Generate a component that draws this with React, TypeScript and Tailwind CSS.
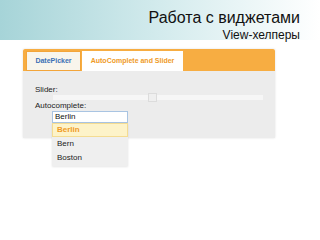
import React from "react";

const ITEMS = ["Berlin", "Bern", "Boston"];

export default function App() {
  return (
    <div className="relative h-[240px] w-[320px] overflow-hidden bg-white font-['Liberation_Sans',Arial,sans-serif]">
      {/* Slide header */}
      <div className="flex h-[40px] flex-col items-end bg-gradient-to-r from-[#a6d4d8] via-[#d3ebed] to-white pr-[20px] pt-[9px]">
        <div className="text-[16px] leading-[18px] text-[#111]">Работа с виджетами</div>
        <div className="mt-[2px] text-[12px] leading-[12px] text-[#111]">View-хелперы</div>
      </div>

      {/* Widget panel */}
      <div className="relative ml-[23px] mt-[9px] w-[252px] shadow-[0_0_2px_rgba(0,0,0,0.12)]">
        <div className="flex h-[22px] items-end gap-[1px] rounded-t-[2px] bg-[#f7ad42] pl-[3px]">
          <div className="flex h-[20px] w-[55px] items-center justify-center border border-[#f3a53a] bg-[#f8f5ec] text-[7px] font-bold text-[#3b70b5]">
            DatePicker
          </div>
          <div className="flex h-[20px] w-[101px] items-center justify-center bg-white text-[7px] font-bold text-[#ef9a26]">
            AutoComplete and Slider
          </div>
        </div>
        <div className="h-[67px] bg-[#ececec] px-[12px] pt-[14px] text-[8px] text-[#222]">
          <div className="h-[10px] leading-[10px]">Slider:</div>
          <div className="relative ml-[18px] h-[5px] w-[210px] bg-[#f6f6f6]">
            <div className="absolute left-[95px] top-[-2px] h-[9px] w-[9px] border border-[#dcdcdc] bg-[#efefef]" />
          </div>
          <div className="mt-[1px] h-[10px] leading-[10px]">Autocomplete:</div>
          <div className="relative ml-[17px] flex h-[12px] w-[76px] items-center border border-[#a9c4e2] bg-white pl-[2px] text-[8px] text-[#111]">
            Berlin
            <div className="absolute left-[-1px] top-[11px] w-[76px] bg-[#efefef] pb-[1px] shadow-[0_1px_2px_rgba(0,0,0,0.1)]">
              {ITEMS.map((c, i) => (
                <div
                  key={c}
                  className={
                    i === 0
                      ? "flex h-[14px] items-center border border-[#f4dc92] bg-[#fdf3c9] pl-[4px] font-bold text-[#ef9a26]"
                      : "flex h-[14px] items-center pl-[5px] text-[#222]"
                  }
                >
                  {c}
                </div>
              ))}
            </div>
          </div>
        </div>
      </div>
    </div>
  );
}
